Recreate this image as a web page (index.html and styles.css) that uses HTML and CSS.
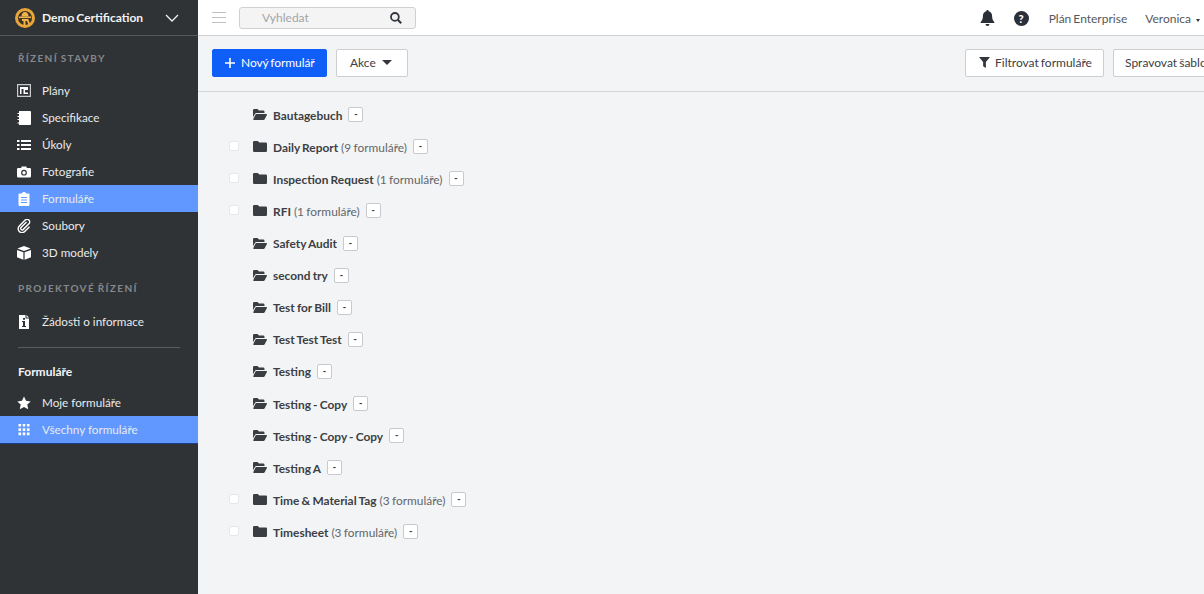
FILE: index.html
```html
<!DOCTYPE html>
<html lang="cs">
<head>
<meta charset="utf-8">
<title>Formuláře</title>
<link rel="stylesheet" href="styles.css">
</head>
<body>
<svg class="defs" width="0" height="0">
  <symbol id="closed" viewBox="0 0 14 11"><path d="M1.2 0h3.600l1.500 1.500h6.500A1.200 1.200 0 0 1 14 2.700V9.800A1.200 1.200 0 0 1 12.800 11H1.200A1.200 1.200 0 0 1 0 9.800V1.200A1.200 1.200 0 0 1 1.200 0z"/></symbol>
  <symbol id="open" viewBox="0 0 14 11"><path d="M0 1.200A1.200 1.200 0 0 1 1.200 0h3.300l1.500 1.500h4.300a1.200 1.200 0 0 1 1.200 1.200V4H3.500a1.800 1.800 0 0 0-1.600.9L0 8.300z"/><path d="M3.500 5H13.300c.6 0 .9.600.6 1.100l-2.200 4.100a1.500 1.500 0 0 1-1.300.8H.9c-.6 0-.9-.6-.6-1.100l2-3.900A1.500 1.500 0 0 1 3.500 5z"/></symbol>
</svg>
<div class="app">
  <aside class="sidebar">
    <div class="brand">
      <svg class="logo" viewBox="0 0 20 20" width="20" height="20"><circle cx="10" cy="10" r="10" fill="#e9a53a"/><circle cx="10" cy="10" r="7" fill="#3a3325"/><path d="M4 8.500h12v1.600H4z" fill="#f0b24a"/><path d="M6.500 8.500C6.500 5.500 8 4 10 4s3.500 1.500 3.500 4.500z" fill="#f0b24a"/><path d="M7 11h6.200l1.800 4.500-1.500 1.300L12 13H10.500v4.500H8.500V13H7z" fill="#f0b24a"/></svg>
      <span class="brand-name">Demo Certification</span>
      <svg class="chev" viewBox="0 0 14 8" width="14" height="8"><path d="M1 1l6 6 6-6" fill="none" stroke="#f2f2f2" stroke-width="1.300"/></svg>
    </div>
    <div class="sec-title first">ŘÍZENÍ STAVBY</div>
    <nav>
      <a class="item"><svg class="ico" viewBox="0 0 14 14"><path fill="#c9cbcd" fill-rule="evenodd" d="M0 0h14v13H0zM1.200 1.200v10.600h11.600V1.200z"/><path d="M3 3h8v3H8v2.500h3V10H6.500V5H4.500v5H3z"/></svg>Plány</a>
      <a class="item"><svg class="ico" viewBox="0 0 14 14"><path d="M2 0h11a1 1 0 0 1 1 1v12a1 1 0 0 1-1 1H2v-1.500H0.500v-1H2V9H.5V8H2V6H.5V5H2V3H.5V2H2z"/></svg>Specifikace</a>
      <a class="item"><svg class="ico" viewBox="0 0 14 14"><path d="M0 2h2.500v2H0zM4 2h10v2H4zM0 6h2.500v2H0zM4 6h10v2H4zM0 10h2.500v2H0zM4 10h10v2H4z"/></svg>Úkoly</a>
      <a class="item"><svg class="ico" viewBox="0 0 14 14"><path fill-rule="evenodd" d="M1.200 3H4l.8-1.500h4.400L10 3h2.800A1.200 1.200 0 0 1 14 4.200v7.100a1.200 1.200 0 0 1-1.200 1.200H1.200A1.200 1.200 0 0 1 0 11.300V4.200A1.200 1.200 0 0 1 1.200 3zM7 4.800a2.900 2.900 0 1 0 0 5.800 2.900 2.900 0 0 0 0-5.800zM7 6a1.700 1.700 0 1 1 0 3.400A1.700 1.700 0 0 1 7 6z"/></svg>Fotografie</a>
      <a class="item active"><svg class="ico" viewBox="0 0 14 14"><path fill-rule="evenodd" d="M2.500 1.500H5C5 .5 6 0 7 0s2 .5 2 1.500h2.500a1 1 0 0 1 1 1V13a1 1 0 0 1-1 1h-9a1 1 0 0 1-1-1V2.500a1 1 0 0 1 1-1zM4 5v1h6V5zM4 7.500v1h6v-1zM4 10v1h6v-1z"/></svg>Formuláře</a>
      <a class="item"><svg class="ico" viewBox="0 0 14 14"><path d="M9.500 3L4 8.500a1.500 1.500 0 0 0 2.100 2.100l5.800-5.800a2.600 2.600 0 0 0-3.700-3.700L2.300 7a3.800 3.800 0 0 0 5.400 5.400L12.500 7.700" fill="none" stroke="#fff" stroke-width="1.400"/></svg>Soubory</a>
      <a class="item"><svg class="ico" viewBox="0 0 14 14"><path d="M7 0l6 2.200c.3.100.3.500 0 .6L7 5 1 2.800c-.3-.1-.3-.5 0-.6zM0 4l6.400 2.200v7.600L.6 11.500c-.4-.1-.6-.4-.6-.8zM14 4L7.600 6.200v7.600l5.800-2.300c.4-.1.600-.4.600-.8z"/></svg>3D modely</a>
    </nav>
    <div class="sec-title second">PROJEKTOVÉ ŘÍZENÍ</div>
    <nav>
      <a class="item"><svg class="ico" viewBox="0 0 14 14"><path fill-rule="evenodd" d="M2 0h6.500v3.500H12V14H2zM9.500 0L12 2.500H9.500zM6 3v1.800h2V3zM5 6v1h1v4H5v1h4v-1H8V6z"/></svg>Žádosti o informace</a>
    </nav>
    <div class="rule"></div>
    <div class="sub-title">Formuláře</div>
    <nav>
      <a class="item"><svg class="ico" viewBox="0 0 14 14"><path d="M7 .5l2 4.300 4.700.6-3.400 3.200.9 4.700L7 11l-4.200 2.300.9-4.700L.3 5.400 5 4.800z"/></svg>Moje formuláře</a>
      <a class="item active last"><svg class="ico" viewBox="0 0 14 14"><path d="M1.500 1h2.600v2.600H1.500zM5.700 1h2.600v2.600H5.700zM9.900 1h2.600v2.600H9.900zM1.500 5.300h2.600v2.600H1.500zM5.700 5.300h2.600v2.600H5.700zM9.900 5.300h2.600v2.600H9.900zM1.500 9.600h2.600v2.600H1.500zM5.700 9.600h2.600v2.600H5.700zM9.900 9.600h2.600v2.600H9.900z"/></svg>Všechny formuláře</a>
    </nav>
  </aside>
  <main class="main">
    <header class="topbar">
      <div class="burger"><i></i><i></i><i></i></div>
      <div class="search">
        <span>Vyhledat</span>
        <svg viewBox="0 0 12 12" width="12" height="12"><circle cx="4.900" cy="4.900" r="3.900" fill="none" stroke="#33373c" stroke-width="1.800"/><path d="M7.800 7.800l3.400 3.400" stroke="#33373c" stroke-width="2.100"/></svg>
      </div>
      <div class="top-right">
        <svg class="bell" viewBox="0 0 14 16" width="15" height="16"><path d="M7 0a1.100 1.100 0 0 1 1.100 1.300C10.300 1.800 11.600 3.600 11.600 6c0 3.500 1 4.800 2.200 6 .3.400.1 1-.5 1H.7c-.6 0-.8-.6-.5-1C1.400 10.800 2.400 9.500 2.400 6c0-2.400 1.300-4.200 3.500-4.700A1.100 1.100 0 0 1 7 0zM5 14h4a2 2 0 0 1-4 0z" fill="#2b3038"/></svg>
        <span class="help">?</span>
        <span class="plan">Plán Enterprise</span>
        <span class="user">Veronica<i class="caret tiny"></i></span>
      </div>
    </header>
    <section class="toolbar">
      <button class="btn primary"><svg viewBox="0 0 10 10" width="10" height="10"><path d="M5 0v10M0 5h10" stroke="#fff" stroke-width="1.600"/></svg>Nový formulář</button>
      <button class="btn akce">Akce<i class="caret"></i></button>
      <div class="spacer"></div>
      <button class="btn filter"><svg viewBox="0 0 12 12" width="11" height="11"><path d="M0 0h12L7.500 5.500V12L4.500 10V5.500z" fill="#33373c"/></svg>Filtrovat formuláře</button>
      <button class="btn manage">Spravovat šablony</button>
    </section>
    <section class="list">
      <div class="row"><span class="check none"></span><svg class="folder"><use href="#open"/></svg><b>Bautagebuch</b><span class="mini">-</span></div>
      <div class="row"><span class="check"></span><svg class="folder"><use href="#closed"/></svg><b>Daily Report</b><span class="count">(9 formuláře)</span><span class="mini">-</span></div>
      <div class="row"><span class="check"></span><svg class="folder"><use href="#closed"/></svg><b>Inspection Request</b><span class="count">(1 formuláře)</span><span class="mini">-</span></div>
      <div class="row"><span class="check"></span><svg class="folder"><use href="#closed"/></svg><b>RFI</b><span class="count">(1 formuláře)</span><span class="mini">-</span></div>
      <div class="row"><span class="check none"></span><svg class="folder"><use href="#open"/></svg><b>Safety Audit</b><span class="mini">-</span></div>
      <div class="row"><span class="check none"></span><svg class="folder"><use href="#open"/></svg><b>second try</b><span class="mini">-</span></div>
      <div class="row"><span class="check none"></span><svg class="folder"><use href="#open"/></svg><b>Test for Bill</b><span class="mini">-</span></div>
      <div class="row"><span class="check none"></span><svg class="folder"><use href="#open"/></svg><b>Test Test Test</b><span class="mini">-</span></div>
      <div class="row"><span class="check none"></span><svg class="folder"><use href="#open"/></svg><b>Testing</b><span class="mini">-</span></div>
      <div class="row"><span class="check none"></span><svg class="folder"><use href="#open"/></svg><b>Testing - Copy</b><span class="mini">-</span></div>
      <div class="row"><span class="check none"></span><svg class="folder"><use href="#open"/></svg><b>Testing - Copy - Copy</b><span class="mini">-</span></div>
      <div class="row"><span class="check none"></span><svg class="folder"><use href="#open"/></svg><b>Testing A</b><span class="mini">-</span></div>
      <div class="row"><span class="check"></span><svg class="folder"><use href="#closed"/></svg><b>Time &amp; Material Tag</b><span class="count">(3 formuláře)</span><span class="mini">-</span></div>
      <div class="row"><span class="check"></span><svg class="folder"><use href="#closed"/></svg><b>Timesheet</b><span class="count">(3 formuláře)</span><span class="mini">-</span></div>
    </section>
  </main>
</div>
</body>
</html>
```
FILE: styles.css
```css
* { box-sizing: border-box; }
html, body { margin: 0; height: 100%; overflow: hidden; }
body { font-family: Lato, "Noto Sans", sans-serif; font-size: 12px; color: #3c4046; background: #f3f4f6; word-spacing: -1px; }
.defs { position: absolute; }
.app { display: flex; width: 1204px; height: 594px; overflow: hidden; }

.sidebar { width: 198px; flex: none; background: #303336; color: #eef0f1; }
.brand { display: flex; align-items: center; height: 36px; padding-left: 15px; border-bottom: 1px solid #55585b; }
.logo { flex: none; }
.brand-name { margin-left: 7px; width: 101px; font-size: 12px; font-weight: 700; color: #f2f3f4; white-space: nowrap; }
.chev { margin-left: 22px; }
.sec-title { font-size: 10px; font-weight: 700; letter-spacing: 1.350px; color: #85888b; padding-left: 18px; line-height: 14px; }
.sec-title.first { padding-top: 15px; height: 41px; }
.sec-title.second { margin-top: 15px; height: 27px; }
.item { display: flex; align-items: center; height: 27px; padding-left: 17px; font-size: 11.700px; line-height: 15px; word-spacing: 0; color: #e8eaeb; }
.item.active { background: #6198ff; }
.item.last { height: 28px; border-bottom: 1px solid #1d3f8f; }
.ico { width: 14px; height: 14px; margin-right: 11px; fill: #fff; flex: none; }
.rule { height: 1px; margin: 12px 18px 0; background: #5a5d60; }
.sub-title { font-size: 12px; font-weight: 700; color: #f4f5f6; padding: 16px 0 0 18px; height: 41px; line-height: 15px; }

.main { flex: 1; min-width: 0; display: flex; flex-direction: column; }
.topbar { display: flex; align-items: center; height: 36px; flex: none; padding: 0 0 0 14px; background: #fff; border-bottom: 1px solid #d0d1d3; }
.burger { width: 14px; display: flex; flex-direction: column; gap: 4px; margin-right: 13px; }
.burger i { height: 1px; background: #bfc1c4; display: block; }
.search { display: flex; align-items: center; justify-content: space-between; width: 177px; height: 22px; padding: 0 13px 0 22px; background: #f4f4f5; border: 1px solid #cfd0d2; border-radius: 3px; color: #a3a5a8; font-size: 12px; }
.top-right { margin-left: auto; display: flex; align-items: center; height: 100%; padding-top: 1px; }
.bell { margin-right: 19px; }
.help { width: 15px; height: 15px; border-radius: 50%; background: #2b3038; color: #fff; font-size: 11px; font-weight: 900; line-height: 15px; text-align: center; margin-right: 20px; }
.plan { font-size: 12px; color: #55585c; margin-right: 18px; }
.user { font-size: 12px; color: #55585c; padding-right: 4px; white-space: nowrap; }

.caret { display: inline-block; width: 0; height: 0; border: 5px solid transparent; border-top: 5px solid #33373c; border-bottom: 0; margin-left: 6px; vertical-align: 2px; }
.caret.tiny { border-width: 3px 2.500px 0; margin-left: 5px; vertical-align: 1px; }

.toolbar { display: flex; align-items: center; flex: none; height: 56px; padding: 0 0 2px 14px; border-bottom: 1px solid #d4d5d7; overflow: hidden; }
.spacer { flex: 1; }
.btn { display: inline-flex; align-items: center; height: 28px; font: 12px Lato, "Noto Sans", sans-serif; word-spacing: -1px; color: #3c4046; background: #fff; border: 1px solid #cdced1; border-radius: 2px; padding: 0; white-space: nowrap; flex: none; }
.btn.primary { width: 115px; padding-left: 12px; background: #0f5ef7; border-color: #0f5ef7; color: #fff; letter-spacing: -.08px; }
.btn.primary svg { margin-right: 6px; }
.btn.akce { width: 72px; margin-left: 9px; padding-left: 13px; }
.btn.filter { width: 139px; padding-left: 13px; }
.btn.filter svg { margin-right: 5px; }
.btn.manage { width: 100px; margin-left: 9px; margin-right: -9px; padding-left: 11px; overflow: hidden; }

.list { padding-top: 7.150px; }
.row { display: flex; align-items: center; height: 32.100px; padding-left: 31px; font-size: 11.900px; line-height: 15px; word-spacing: -.7px; color: #63666a; }
.check { width: 10px; height: 10px; margin-right: 14px; background: #fff; border: 1px solid #e6e7e9; border-radius: 2px; margin-top: -3px; flex: none; }
.check.none { visibility: hidden; }
.folder { width: 14px; height: 11px; margin-right: 6px; fill: #3a3d41; flex: none; margin-top: -1px; }
.row b { font-weight: 700; color: #3c3f44; }
.count { margin-left: 3px; }
.mini { display: flex; justify-content: center; width: 15px; height: 15px; margin-left: 6px; margin-top: -1px; background: #fff; border: 1px solid #c9cacd; border-radius: 2px; color: #33373c; font-size: 9px; font-weight: 900; line-height: 12px; }
```
